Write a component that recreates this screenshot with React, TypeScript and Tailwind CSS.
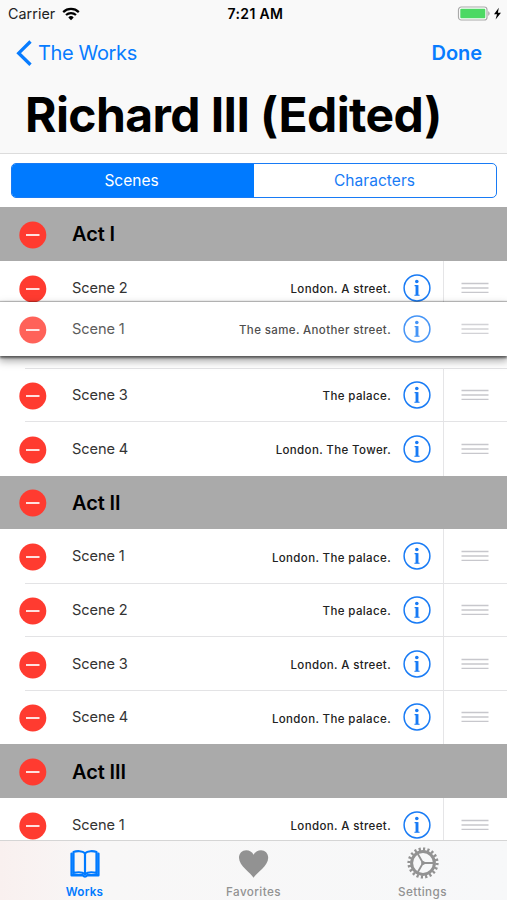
import React from 'react';

interface Scene {
  name: string;
  location: string;
}

interface Act {
  title: string;
  scenes: (Scene | null)[];
}

// null leaves the open slot under the row being dragged
const acts: Act[] = [
  {
    title: 'Act I',
    scenes: [
      { name: 'Scene 2', location: 'London. A street.' },
      null,
      { name: 'Scene 3', location: 'The palace.' },
      { name: 'Scene 4', location: 'London. The Tower.' },
    ],
  },
  {
    title: 'Act II',
    scenes: [
      { name: 'Scene 1', location: 'London. The palace.' },
      { name: 'Scene 2', location: 'The palace.' },
      { name: 'Scene 3', location: 'London. A street.' },
      { name: 'Scene 4', location: 'London. The palace.' },
    ],
  },
  {
    title: 'Act III',
    scenes: [{ name: 'Scene 1', location: 'London. A street.' }],
  },
];

function DeleteIcon() {
  return (
    <svg className="mt-[2px] ml-[19px] h-[28px] w-[28px] shrink-0" viewBox="0 0 28 28">
      <circle cx="13.8" cy="14" r="13.5" fill="#ff3b30" />
      <path d="M7 14h13.5" stroke="#fff" strokeWidth="1.7" />
    </svg>
  );
}

function InfoIcon() {
  return (
    <svg className="h-[28px] w-[28px] shrink-0" viewBox="0 0 28 28" fill="none">
      <circle cx="14" cy="14" r="12.9" stroke="#187bf5" strokeWidth="1.5" />
      <circle cx="13.8" cy="7.5" r="1.8" fill="#187bf5" />
      <path d="M11.6 11.6h2.6M11.4 21.2h5.2" stroke="#187bf5" strokeWidth="1.1" />
      <path d="M14 11.1v10" stroke="#187bf5" strokeWidth="2.9" />
    </svg>
  );
}

function DragHandle() {
  return (
    <svg className="h-[12px] w-[28px]" viewBox="0 0 28 12" stroke="#c7c7cc" strokeWidth="1.4">
      <path d="M.5 1.5h27M.5 6h27M.5 10.4h27" />
    </svg>
  );
}

function ActHeader({ title }: { title: string }) {
  return (
    <div className="flex h-[53.73px] items-center bg-[#aaaaaa]">
      <DeleteIcon />
      <h2 className="mt-px ml-[25px] text-[20px] font-semibold tracking-[-0.1px] text-black">{title}</h2>
    </div>
  );
}

function SceneRow({ scene, lifted = false }: { scene: Scene; lifted?: boolean }) {
  return (
    <div className="flex h-full items-center">
      <DeleteIcon />
      <span className="mt-[2px] ml-[25px] text-[14.6px] tracking-[-0.1px] text-[#333]">{scene.name}</span>
      <span className="mt-[4px] ml-auto text-[11.5px] font-medium tracking-[0.37px] text-[#222]">{scene.location}</span>
      <div className="ml-[12px] flex">
        <InfoIcon />
      </div>
      <div
        className={`ml-[12px] flex h-full w-[64px] items-center border-l pl-[17px] ${
          lifted ? 'border-transparent' : 'border-[#e5e5e7]'
        }`}
      >
        <DragHandle />
      </div>
    </div>
  );
}

function StatusBar() {
  return (
    <div className="grid h-[27px] grid-cols-3 items-center text-[14.3px] text-black">
      <div className="flex items-center pl-[8px]">
        <span className="tracking-[0.05px] text-[#222]">Carrier</span>
        <svg className="ml-[7px] h-[14px] w-[18px]" viewBox="0 0 18 14" fill="none" stroke="#000">
          <path d="M1.2 5.1a11.2 11.2 0 0 1 15.6 0" strokeWidth="2.2" />
          <path d="M4 8.1a7.2 7.2 0 0 1 10 0" strokeWidth="2.1" />
          <path d="M9 13.2 6.3 10.4a3.9 3.9 0 0 1 5.4 0z" fill="#000" stroke="none" />
        </svg>
      </div>
      <span className="pl-[4px] text-center text-[14px] font-semibold tracking-[0.35px]">7:21 AM</span>
      <div className="flex items-center justify-end pr-[5px]">
        <svg className="h-[16px] w-[45px]" viewBox="0 0 45 16">
          <rect x="1.5" y="1" width="28.5" height="13" rx="2.8" fill="#fff" stroke="#aaa" strokeWidth="1.2" />
          <rect x="3.3" y="2.7" width="25" height="9.6" rx="1" fill="#4cd964" />
          <path d="M31.2 5q3 2.5 0 5z" fill="#aaa" />
          <path d="M41.8 1.8 37 8.3h3l-1.4 5.2L44 6.7h-3.1z" fill="#000" />
        </svg>
      </div>
    </div>
  );
}

function NavBar() {
  return (
    <header className="h-[154px] border-b border-[#dcdcdc] bg-[#f9f9f9]">
      <StatusBar />
      <div className="flex h-[51px] items-center justify-between pr-[25px] pl-[16px] text-[20px] text-[#087cff]">
        <div className="flex items-center">
          <svg className="h-[26px] w-[16px]" viewBox="0 0 16 26" fill="none" stroke="#087cff" strokeWidth="3.3">
            <path d="M14.5 1.5 2.7 13.2l11.8 11.5" />
          </svg>
          <span className="ml-[6px] tracking-[-0.35px]">The Works</span>
        </div>
        <span className="font-semibold tracking-[-0.05px]">Done</span>
      </div>
      <h1 className="pl-[25px] text-[48px] leading-[73px] font-bold tracking-[-0.6px] whitespace-nowrap text-black">
        Richard III (Edited)
      </h1>
    </header>
  );
}

function SegmentedControl() {
  return (
    <div className="flex h-[53px] items-center px-[10.5px]">
      <div className="flex h-[35.5px] flex-1 overflow-hidden rounded-[5px] border-[1.4px] border-[#187bf5] text-[15.5px]">
        <div className="flex w-1/2 items-center justify-center bg-[#007aff] pt-px pr-[2px] text-white">Scenes</div>
        <div className="flex w-1/2 items-center justify-center pt-px tracking-[0.05px] text-[#187bf5]">Characters</div>
      </div>
    </div>
  );
}

function BookIcon() {
  return (
    <svg className="h-[30px] w-[32px]" viewBox="0 0 32 30" fill="none" stroke="#007aff" strokeLinejoin="round">
      <path
        d="M16 4.2C13.5 1.9 8 1.6 4.5 3.1v20.8c4-.9 9-.8 11.5 1.2 2.5-2 7.5-2.1 11.5-1.2V3.1C24 1.6 18.5 1.9 16 4.2z"
        strokeWidth="2.2"
      />
      <path d="M16 4v22" strokeWidth="2.2" />
      <path d="M2.6 4.6v21.6h11.2q2.2 2.6 4.4 0h11.2V4.6" strokeWidth="2.4" strokeLinecap="round" />
    </svg>
  );
}

function HeartIcon() {
  return (
    <svg className="h-[30px] w-[32px]" viewBox="0 0 32 30" fill="#929292">
      <path d="M15.6 28.8C13 24 1 17 1 8.7 1 4.3 4.2 1.2 8.2 1.2c3.3 0 5.9 1.7 7.4 4.5 1.5-2.8 4.1-4.5 7.4-4.5 4 0 7.2 3.1 7.2 7.5 0 8.3-12 15.3-14.6 20.1z" />
    </svg>
  );
}

function GearIcon() {
  return (
    <svg className="h-[32px] w-[32px]" viewBox="0 0 32 32" fill="none" stroke="#929292">
      <circle cx="16" cy="16" r="14" strokeWidth="3.2" pathLength="40" strokeDasharray="1 1" />
      <circle cx="16" cy="16" r="11.4" strokeWidth="3" />
      <circle cx="16" cy="16" r="1.9" fill="#929292" stroke="none" />
      <path d="M16 16h10M16 16 11 7.3M16 16l-5 8.7" strokeWidth="1.8" />
    </svg>
  );
}

function TabBar() {
  return (
    <nav className="absolute inset-x-0 bottom-0 grid h-[60px] grid-cols-3 border-t border-[#d5d5d5] bg-[#f7f8f9] bg-linear-to-r from-[#f9f0ef] via-[#f8f7f7] via-20% to-[#f7f8f9] text-[11.7px] font-medium tracking-[0.4px] text-[#929292]">
      <div className="flex flex-col items-center pt-[8px] text-[#007aff]">
        <BookIcon />
        <span className="mt-[4px] leading-[18px] font-semibold tracking-[0.2px]">Works</span>
      </div>
      <div className="flex flex-col items-center pt-[8px]">
        <HeartIcon />
        <span className="mt-[4px] leading-[18px]">Favorites</span>
      </div>
      <div className="flex flex-col items-center pt-[6px]">
        <GearIcon />
        <span className="mt-[4px] leading-[18px]">Settings</span>
      </div>
    </nav>
  );
}

export default function App() {
  return (
    <div className="relative h-[900px] w-[507px] overflow-hidden bg-white font-['Inter','Liberation_Sans',sans-serif]">
      <NavBar />
      <SegmentedControl />

      <main>
        {acts.map((act) => (
          <section key={act.title}>
            <ActHeader title={act.title} />
            {act.scenes.map((scene, idx) => (
              <div key={idx} className="relative h-[53.73px]">
                {scene && <SceneRow scene={scene} />}
                {idx < act.scenes.length - 1 && (
                  <div className="absolute right-0 bottom-[-0.5px] left-[25px] h-px bg-[#e3e3e5]" />
                )}
              </div>
            ))}
          </section>
        ))}
      </main>

      {/* Row being dragged */}
      <div className="absolute inset-x-0 top-[302px] h-[54px] bg-white shadow-[0_-1px_1px_0_rgba(0,0,0,0.25),0_2px_2px_0_rgba(0,0,0,0.5),0_4px_8px_1px_rgba(0,0,0,0.35)]">
        <div className="h-full opacity-80">
          <SceneRow scene={{ name: 'Scene 1', location: 'The same. Another street.' }} lifted />
        </div>
      </div>

      <TabBar />
    </div>
  );
}
